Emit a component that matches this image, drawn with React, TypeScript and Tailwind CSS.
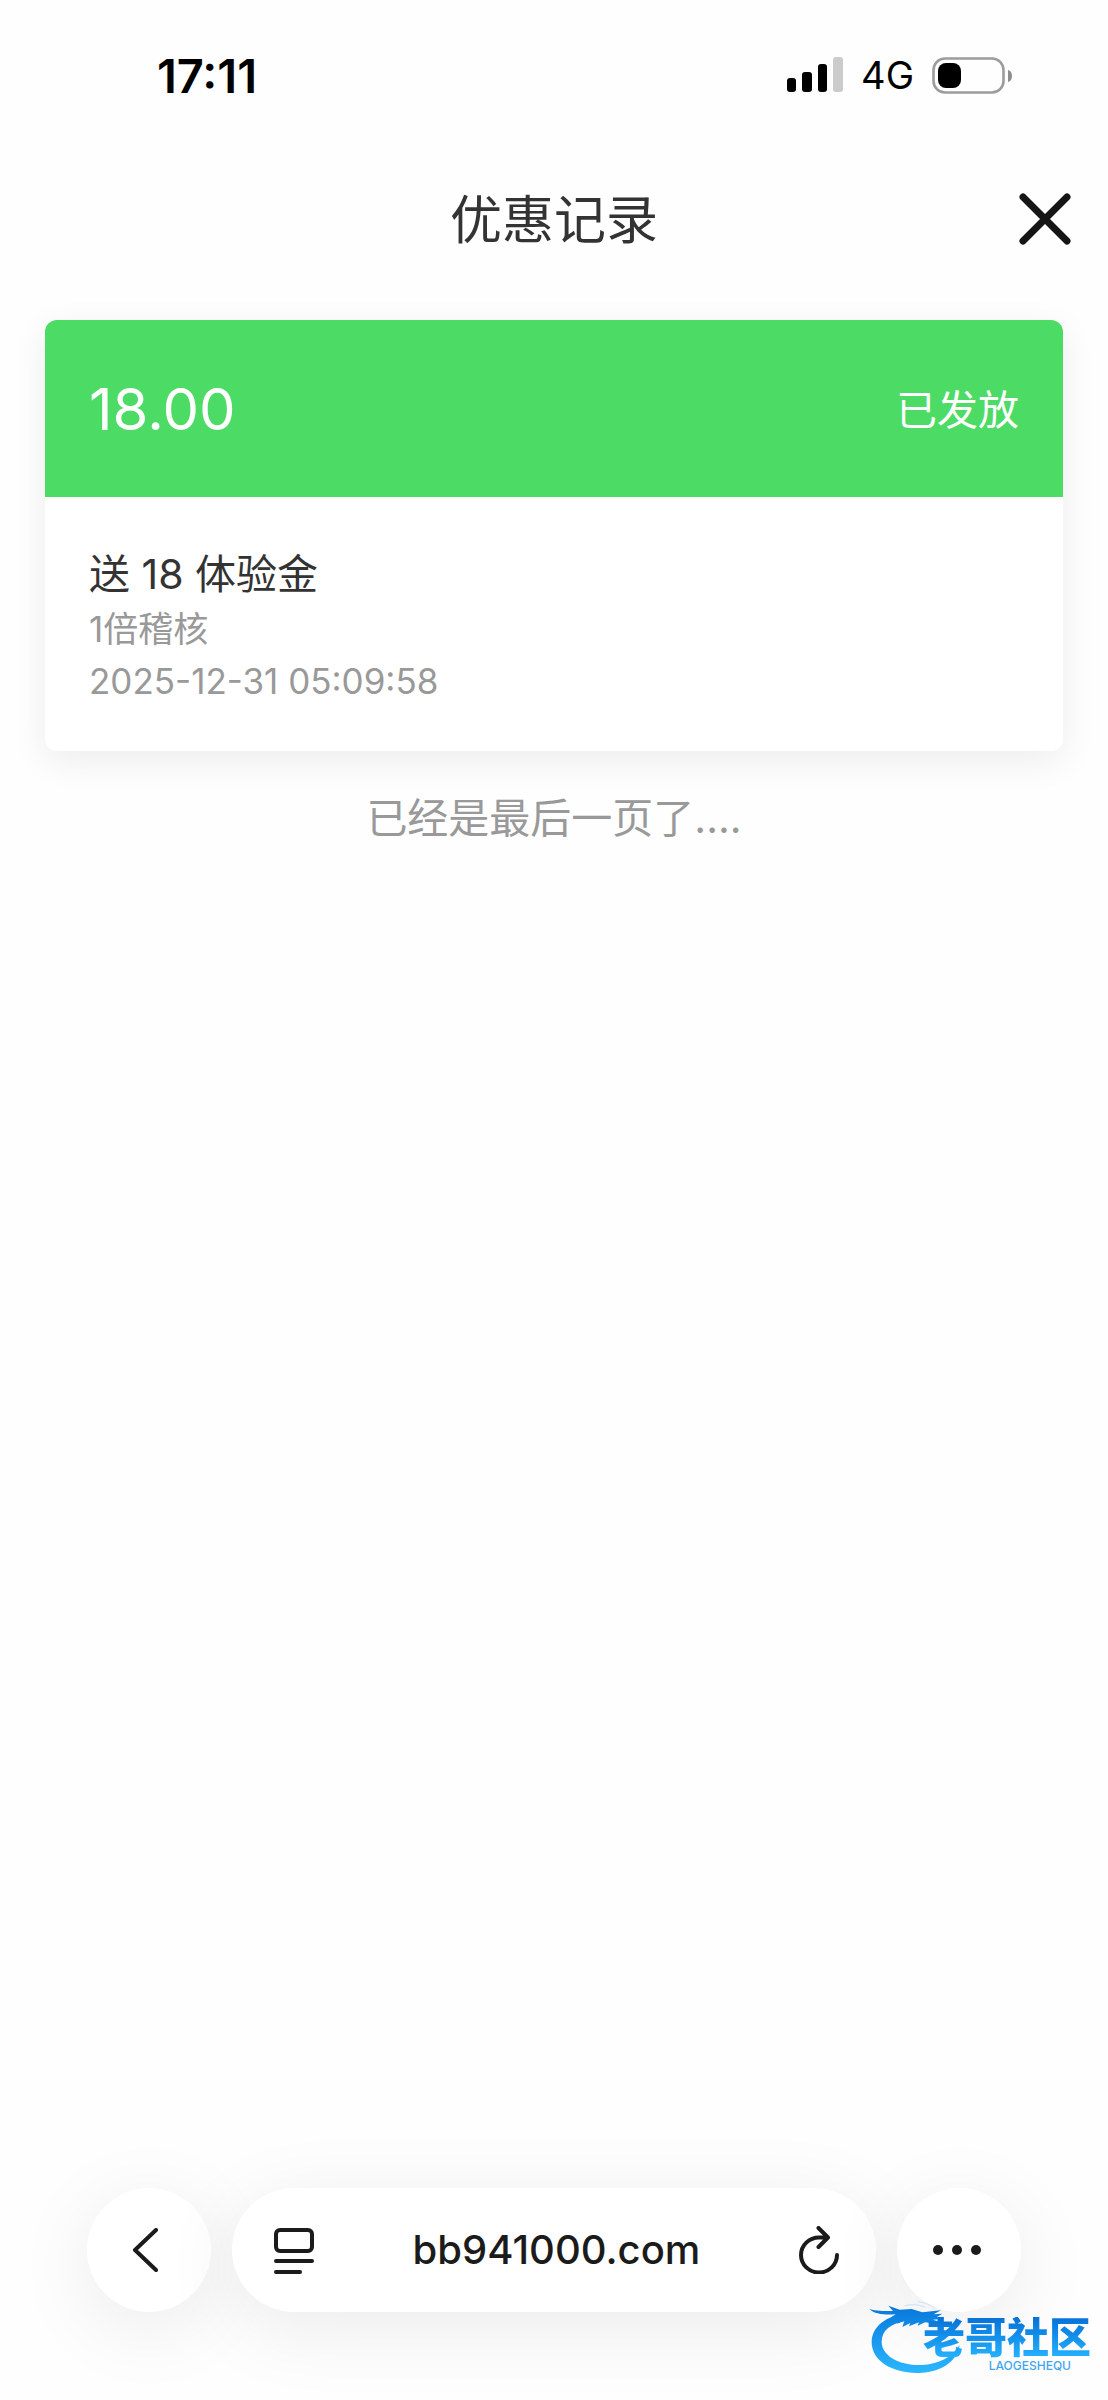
function StatusBar() {
  return (
    <div className="flex h-[150px] items-center justify-between pr-24 pl-[157px]">
      <time className="text-[47px] leading-none font-semibold text-black">17:11</time>
      <div className="flex items-center gap-[18px] text-black">
        <svg className="h-9 w-14" viewBox="0 0 56 36" role="img" aria-label="信号">
          <rect x="0" y="21" width="9" height="14" rx="3" />
          <rect x="15" y="15" width="10" height="20" rx="3" />
          <rect x="31" y="7" width="9" height="28" rx="3" />
          <rect x="46" y="0" width="10" height="35" rx="3" fill="#cbcbcb" />
        </svg>
        <span className="text-[38px] leading-none">4G</span>
        <svg className="h-[37px] w-20" viewBox="0 0 80 37" role="img" aria-label="电池">
          <rect x="1.5" y="1.5" width="70" height="34" rx="11.5" fill="none" stroke="#9c9c9c" strokeWidth="2.6" />
          <rect x="6" y="6" width="23" height="25" rx="8" />
          <path d="M76 13q4 1 4 6t-4 6z" fill="#8d8d8d" />
        </svg>
      </div>
    </div>
  );
}

function Header() {
  return (
    <header className="relative flex h-[137px] items-center justify-center">
      <h1 className="pt-1 text-[52px] leading-none text-[#333]">优惠记录</h1>
      <button type="button" aria-label="关闭" className="absolute right-[37px] flex">
        <svg className="size-[52px]" viewBox="0 0 52 52" fill="none" stroke="#151515" strokeWidth="7" strokeLinecap="round">
          <path d="M4 4l44 44M48 4L4 48" />
        </svg>
      </button>
    </header>
  );
}

function RecordCard() {
  return (
    <article className="overflow-hidden rounded-xl bg-white shadow-[0_10px_36px_rgba(0,0,0,0.07)]">
      <div className="flex h-[177px] items-center justify-between bg-[#4cdb64] px-11 text-white">
        <span className="text-[58px] leading-none">18.00</span>
        <span className="pt-1 text-[41px] leading-none">已发放</span>
      </div>
      <div className="flex flex-col px-11 pt-12 pb-11">
        <h2 className="text-[41px] leading-[58px] text-[#333]">送 18 体验金</h2>
        <p className="text-[35px] leading-[52px] text-[#999]">1倍稽核</p>
        <time className="text-[35px] leading-[52px] text-[#999]">2025-12-31 05:09:58</time>
      </div>
    </article>
  );
}

function BrowserBar() {
  return (
    <nav className="flex items-center gap-[21px] px-[87px] pb-[88px]">
      <button
        type="button"
        aria-label="返回"
        className="flex size-[124px] shrink-0 items-center justify-center rounded-full bg-white pr-2 shadow-[0_16px_80px_rgba(0,0,0,0.08)]"
      >
        <svg className="h-11 w-[26px]" viewBox="0 0 26 44" fill="none" stroke="#1b1b1b" strokeWidth="4" strokeLinecap="round" strokeLinejoin="round">
          <path d="M24 2L3 22l21 20" />
        </svg>
      </button>
      <div className="flex h-[124px] flex-1 items-center justify-between rounded-full bg-white pr-[37px] pl-[42px] shadow-[0_16px_80px_rgba(0,0,0,0.08)]">
        <button type="button" aria-label="页面菜单">
          <svg className="h-12 w-10" viewBox="0 0 40 48" fill="none" stroke="#1b1b1b" strokeWidth="4" strokeLinecap="round">
            <rect x="2" y="4" width="36" height="21" rx="4" />
            <path d="M2 35h36M2 46h24" />
          </svg>
        </button>
        <span className="text-[40px] leading-none font-medium text-[#1b1b1b]">bb941000.com</span>
        <button type="button" aria-label="刷新">
          <svg className="h-12 w-10" viewBox="0 0 40 48" fill="none" stroke="#1b1b1b" strokeWidth="4" strokeLinecap="round" strokeLinejoin="round">
            <path d="M38 29a18 17.500 0 1 1-18-17.500h8M19.500 2l9.500 9.500-9.500 9.500" />
          </svg>
        </button>
      </div>
      <button
        type="button"
        aria-label="更多"
        className="flex size-[124px] shrink-0 items-center justify-center rounded-full bg-white pr-1 shadow-[0_16px_80px_rgba(0,0,0,0.08)]"
      >
        <svg className="h-3 w-12" viewBox="0 0 48 12" fill="#1b1b1b">
          <circle cx="5" cy="6" r="5" />
          <circle cx="24" cy="6" r="5" />
          <circle cx="43" cy="6" r="5" />
        </svg>
      </button>
    </nav>
  );
}

function CommunityMark() {
  return (
    <div className="absolute right-[17px] bottom-[23px] h-20 w-[226px]">
      <svg className="absolute top-0 left-0 h-20 w-[100px]" viewBox="0 0 300 240" aria-hidden="true">
        <defs>
          <linearGradient id="mark" gradientUnits="userSpaceOnUse" x1="0" y1="30" x2="0" y2="230">
            <stop offset="0" stopColor="#0878dc" />
            <stop offset="1" stopColor="#2bb8ff" />
          </linearGradient>
        </defs>
        <g fill="url(#mark)">
          <path d="M112 50C54 62 20 94 20 136c0 54 60 94 142 92 66-2 114-34 122-84-20 36-64 58-114 60-68 2-120-28-120-70 0-34 28-54 70-62z" />
          <path d="M14 36C34 42 54 42 84 42L70 26 104 38 140 36 172 46 228 40 206 52 232 50 216 60 224 66 204 68 222 74 212 80 180 76 158 86 162 76 132 88 136 78 112 90 118 72 96 80 104 62 76 62 92 52C60 54 28 52 14 36z" />
        </g>
        <path d="M120 26q30-8 60 4M160 14q30 4 50 20" fill="none" stroke="#c9e4f8" strokeWidth="3" strokeLinecap="round" />
      </svg>
      <div className="absolute top-5 right-0 flex flex-col items-end">
        <span className="bg-linear-to-b from-[#0870d8] to-[#27b4ff] bg-clip-text text-[42px] leading-[42px] font-black text-transparent">老哥社区</span>
        <span className="pr-5 text-[12px] leading-[14px] font-medium text-[#3ea6f2]">LAOGESHEQU</span>
      </div>
    </div>
  );
}

export default function App() {
  return (
    <div className="relative flex min-h-screen flex-col bg-[#fefefe] font-['Inter','Noto_Sans_CJK_SC',sans-serif]">
      <StatusBar />
      <Header />
      <main className="flex-1 px-[45px] pt-[33px]">
        <RecordCard />
        <p className="mt-[38px] text-center text-[41px] leading-[58px] text-[#999]">已经是最后一页了....</p>
      </main>
      <BrowserBar />
      <CommunityMark />
    </div>
  );
}
